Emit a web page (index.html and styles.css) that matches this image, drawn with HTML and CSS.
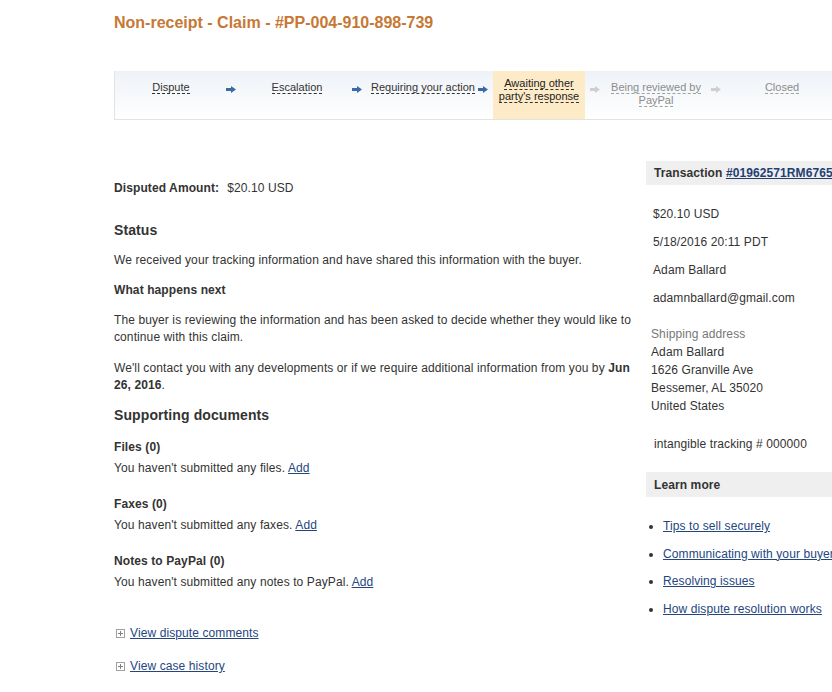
FILE: index.html
```html
<!DOCTYPE html>
<html>
<head>
<meta charset="utf-8">
<title>Non-receipt - Claim</title>
<link rel="stylesheet" href="styles.css">
</head>
<body>
<div class="page">
  <h1 class="title">Non-receipt - Claim - #PP-004-910-898-739</h1>

  <ol class="steps">
    <li class="step done"><span class="label"><span>Dispute</span></span>
      <svg class="arrow" width="10" height="7" viewBox="0 0 10 7"><path d="M0 2 H5 V0 L10 3.5 L5 7 V5 H0 Z"/></svg></li>
    <li class="step done"><span class="label"><span>Escalation</span></span>
      <svg class="arrow" width="10" height="7" viewBox="0 0 10 7"><path d="M0 2 H5 V0 L10 3.5 L5 7 V5 H0 Z"/></svg></li>
    <li class="step done"><span class="label"><span>Requiring your action</span></span>
      <svg class="arrow" width="10" height="7" viewBox="0 0 10 7"><path d="M0 2 H5 V0 L10 3.5 L5 7 V5 H0 Z"/></svg></li>
    <li class="step active"><span class="label"><span>Awaiting other party's response</span></span>
      <svg class="arrow" width="10" height="7" viewBox="0 0 10 7"><path d="M0 2 H5 V0 L10 3.5 L5 7 V5 H0 Z"/></svg></li>
    <li class="step todo"><span class="label"><span>Being reviewed by PayPal</span></span>
      <svg class="arrow" width="10" height="7" viewBox="0 0 10 7"><path d="M0 2 H5 V0 L10 3.5 L5 7 V5 H0 Z"/></svg></li>
    <li class="step todo"><span class="label"><span>Closed</span></span></li>
  </ol>

  <div class="columns">
    <div class="main">
      <div class="amount"><strong>Disputed Amount:</strong><span class="amount-value">$20.10 USD</span></div>

      <h2 class="section status-head">Status</h2>
      <p class="p-first">We received your tracking information and have shared this information with the buyer.</p>
      <h3 class="sub next-head">What happens next</h3>
      <p class="p-buyer">The buyer is reviewing the information and has been asked to decide whether they would like to continue with this claim.</p>
      <p class="p-contact">We'll contact you with any developments or if we require additional information from you by <strong>Jun 26, 2016</strong>.</p>

      <h2 class="section docs-head">Supporting documents</h2>
      <h3 class="sub doc-title first-doc">Files (0)</h3>
      <p class="doc-text">You haven't submitted any files. <a href="#">Add</a></p>
      <h3 class="sub doc-title">Faxes (0)</h3>
      <p class="doc-text">You haven't submitted any faxes. <a href="#">Add</a></p>
      <h3 class="sub doc-title">Notes to PayPal (0)</h3>
      <p class="doc-text">You haven't submitted any notes to PayPal. <a href="#">Add</a></p>

      <div class="toggle toggle-first">
        <svg class="plus" width="9" height="9" viewBox="0 0 9 9"><rect x="0.5" y="0.5" width="8" height="8" fill="#fff" stroke="#a0a0a0"/><path d="M2 4.5 H7 M4.5 2 V7" stroke="#808080" stroke-width="1"/></svg>
        <a href="#">View dispute comments</a>
      </div>
      <div class="toggle toggle-second">
        <svg class="plus" width="9" height="9" viewBox="0 0 9 9"><rect x="0.5" y="0.5" width="8" height="8" fill="#fff" stroke="#a0a0a0"/><path d="M2 4.5 H7 M4.5 2 V7" stroke="#808080" stroke-width="1"/></svg>
        <a href="#">View case history</a>
      </div>
    </div>

    <aside class="side">
      <div class="side-head">Transaction <a href="#">#01962571RM676543X</a></div>
      <p class="detail detail-first">$20.10 USD</p>
      <p class="detail">5/18/2016 20:11 PDT</p>
      <p class="detail">Adam Ballard</p>
      <p class="detail">adamnballard@gmail.com</p>
      <div class="address">
        <div class="muted">Shipping address</div>
        <div>Adam Ballard</div>
        <div>1626 Granville Ave</div>
        <div>Bessemer, AL 35020</div>
        <div>United States</div>
      </div>
      <p class="tracking">intangible tracking # 000000</p>
      <div class="side-head learn-head">Learn more</div>
      <ul class="learn">
        <li><a href="#">Tips to sell securely</a></li>
        <li><a href="#">Communicating with your buyer</a></li>
        <li><a href="#">Resolving issues</a></li>
        <li><a href="#">How dispute resolution works</a></li>
      </ul>
    </aside>
  </div>
</div>
</body>
</html>
```

FILE: styles.css
```css
html, body {
  margin: 0;
  padding: 0;
  background: #fff;
}

body {
  font-family: "Liberation Sans", Arial, sans-serif;
  font-size: 12px;
  color: #333;
  letter-spacing: 0.1px;
  overflow: hidden;
}

a {
  color: #24467f;
  text-decoration: underline;
}

.page {
  margin-left: 114px;
  padding-top: 13px;
  width: 780px;
}

.title {
  margin: 0;
  font-size: 16px;
  line-height: 20px;
  font-weight: bold;
  letter-spacing: 0;
  color: #c67834;
}

/* progress steps */
.steps {
  list-style: none;
  margin: 38px 0 0;
  padding: 0;
  height: 48px;
  border-left: 1px solid #e3e3e3;
  border-bottom: 1px solid #e3e3e3;
  background: linear-gradient(#eef2f7, #ffffff);
  display: flex;
  letter-spacing: 0;
}

.step {
  box-sizing: border-box;
  width: 126px;
  flex: 0 0 auto;
  display: grid;
  grid-template-columns: 8px 108px 10px;
  align-items: start;
  padding-top: 10px;
  font-size: 11px;
  line-height: 13px;
}

.step:first-child {
  width: 120px;
  grid-template-columns: 2px 108px 10px;
}

.label {
  grid-column: 2;
  text-align: center;
}

.label span {
  border-bottom: 1px dashed #333;
}

.arrow {
  grid-column: 3;
  justify-self: end;
  margin-right: -1px;
  margin-top: 5px;
  fill: #3a6ca4;
}

.step.done .label {
  color: #333;
}

.step.todo .label {
  color: #8c8c8c;
}

.step.todo .label span {
  border-bottom-color: #a0a0a0;
}

.step.todo .arrow {
  fill: #cfcfcf;
}

.step.active {
  width: 107px;
  padding-top: 0;
  grid-template-columns: 6px 92px 9px;
}

.step.active .label {
  height: 48px;
  box-sizing: border-box;
  padding-top: 6px;
  background: #fdebc8;
  color: #222;
}

.step.active .arrow {
  fill: #cfcfcf;
  justify-self: start;
  margin-left: 5px;
  margin-right: 0;
  margin-top: 15px;
}

/* columns */
.columns {
  display: flex;
  gap: 10px;
  margin-top: 41px;
  align-items: flex-start;
}

.main {
  width: 522px;
  flex: 0 0 auto;
}

.main p {
  margin: 0;
  line-height: 17px;
}

.amount {
  margin-top: 19px;
  line-height: 17px;
}

.amount-value {
  margin-left: 8px;
}

.section {
  margin: 0;
  font-size: 14px;
  line-height: 18px;
  font-weight: bold;
  color: #333;
}

.sub {
  margin: 0;
  font-size: 12px;
  line-height: 17px;
  font-weight: bold;
  color: #333;
}

.status-head { margin-top: 24px; }
.main .p-first { margin-top: 13px; }
.next-head { margin-top: 13px; }
.main .p-buyer { margin-top: 13px; }
.main .p-contact { margin-top: 14px; }
.docs-head { margin-top: 12px; }

.doc-title { margin-top: 19px; }
.doc-title.first-doc { margin-top: 15px; }
.main .doc-text { margin-top: 4px; }

.toggle {
  display: flex;
  align-items: center;
  gap: 5px;
  padding-left: 2px;
  line-height: 17px;
}

.toggle-first { margin-top: 34px; }
.toggle-second { margin-top: 16px; }

.plus {
  flex: 0 0 auto;
}

/* sidebar */
.side {
  width: 300px;
  flex: 0 0 auto;
}

.side-head {
  height: 24px;
  line-height: 25px;
  padding-left: 8px;
  background: #efefef;
  font-weight: bold;
  color: #333;
  white-space: nowrap;
}

.side-head a {
  color: #1f3f73;
}

.detail {
  margin: 12px 0 0;
  padding-left: 7px;
  line-height: 16px;
}

.detail.detail-first {
  margin-top: 21px;
}

.address {
  margin-top: 19px;
  padding-left: 5px;
  line-height: 18px;
}

.muted {
  color: #777;
}

.tracking {
  margin: 21px 0 0;
  padding-left: 8px;
  line-height: 16px;
}

.learn-head {
  margin-top: 20px;
  height: 25px;
  line-height: 26px;
}

.learn {
  margin: 21px 0 0;
  padding-left: 17px;
  list-style: disc;
}

.learn li {
  line-height: 16px;
  margin-top: 11.7px;
  white-space: nowrap;
}

.learn li:first-child {
  margin-top: 0;
}
```
